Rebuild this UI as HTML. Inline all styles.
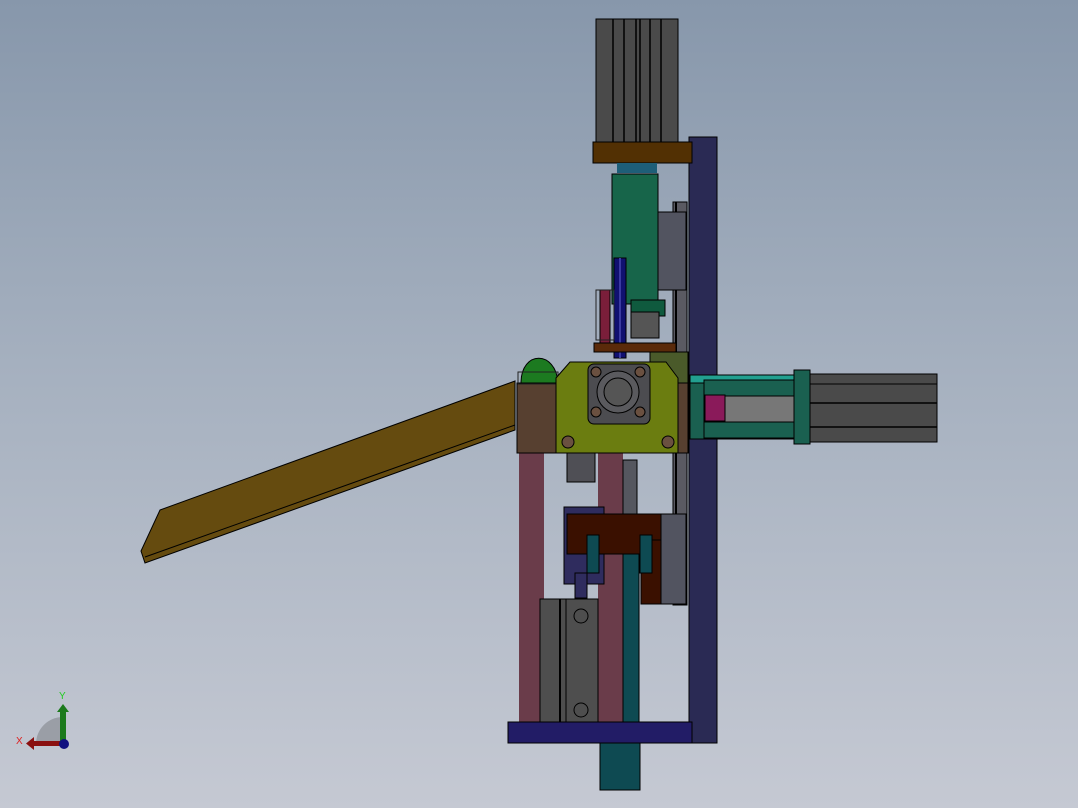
<!DOCTYPE html>
<html><head><meta charset="utf-8"><style>
html,body{margin:0;padding:0;width:1078px;height:808px;overflow:hidden}
body{background:linear-gradient(#8797ab 0%,#a5b0bf 45%,#c5c9d3 100%)}
svg{position:absolute;left:0;top:0}
</style></head><body>
<svg width="1078" height="808" viewBox="0 0 1078 808" stroke="#000" stroke-width="1">
<polygon points="160,510 515,381 515,430 145,563 141,551" fill="#654b0f"/>
<line x1="145" y1="557" x2="515" y2="425" stroke-width="1"/>
<rect x="689" y="137" width="28" height="606" fill="#2a2a54"/>
<rect x="596" y="19" width="82" height="124" fill="#4a4a4a"/>
<g stroke-width="1.5"><line x1="613" y1="19" x2="613" y2="143"/><line x1="624" y1="19" x2="624" y2="143"/><line x1="636" y1="19" x2="636" y2="143"/><line x1="640" y1="19" x2="640" y2="143"/><line x1="650" y1="19" x2="650" y2="143"/><line x1="661" y1="19" x2="661" y2="143"/></g>
<rect x="593" y="142" width="99" height="21" fill="#523003"/>
<rect x="617" y="163" width="40" height="10" fill="#1e5e78" stroke="none"/>
<rect x="673" y="202" width="14" height="403" fill="#5a5a62"/>
<line x1="676" y1="202" x2="676" y2="605" stroke-width="2"/>
<rect x="612" y="174" width="46" height="130" fill="#17654a"/>
<rect x="658" y="212" width="28" height="78" fill="#525460"/>
<rect x="631" y="300" width="34" height="16" fill="#0f5a3e"/>
<rect x="631" y="312" width="28" height="26" fill="#555"/>
<rect x="614" y="258" width="12" height="100" fill="#101070"/>
<line x1="620" y1="258" x2="620" y2="358" stroke="#3a3aa0" stroke-width="2"/>
<rect x="600" y="290" width="10" height="55" fill="#7a1e3a"/>
<rect x="596" y="290" width="18" height="50" fill="none" stroke="#222"/>
<rect x="594" y="343" width="82" height="9" fill="#5a2a0a"/>
<rect x="519" y="440" width="25" height="282" fill="#6a3c4a" stroke="none"/>
<rect x="598" y="440" width="25" height="282" fill="#6a3c4a" stroke="none"/>
<rect x="623" y="535" width="16" height="255" fill="#0e4a52"/>
<rect x="600" y="743" width="40" height="47" fill="#0e4a52"/>
<rect x="567" y="452" width="28" height="30" fill="#4f4f55"/>
<rect x="623" y="460" width="14" height="75" fill="#55575f"/>
<rect x="564" y="507" width="40" height="77" fill="#2f2c5e"/>
<rect x="567" y="514" width="94" height="40" fill="#3a1000"/>
<rect x="641" y="540" width="20" height="64" fill="#3a1000"/>
<rect x="587" y="535" width="12" height="38" fill="#0e4a52"/>
<rect x="640" y="535" width="12" height="38" fill="#0e4a52"/>
<rect x="661" y="514" width="25" height="90" fill="#525460"/>
<rect x="575" y="573" width="12" height="25" fill="#2f2c5e"/>
<rect x="540" y="599" width="58" height="124" fill="#4e4e4e"/>
<line x1="560" y1="599" x2="560" y2="723" stroke-width="2"/><line x1="566" y1="599" x2="566" y2="723"/>
<circle cx="581" cy="616" r="7" fill="none"/><circle cx="581" cy="710" r="7" fill="none"/>
<rect x="508" y="722" width="184" height="21" fill="#221c66"/>
<rect x="517" y="383" width="40" height="70" fill="#574030"/>
<path d="M521,383 C521,350 556,350 558,383 Z" fill="#1c7a20"/>
<rect x="518" y="372" width="40" height="12" fill="none" stroke="#222"/>
<rect x="650" y="352" width="38" height="100" fill="#4a5a2a"/>
<rect x="669" y="383" width="19" height="70" fill="#574030"/>
<polygon points="570,362 666,362 678,378 678,453 556,453 556,378" fill="#6b7d10"/>
<rect x="588" y="364" width="62" height="60" rx="6" fill="#4c4c50"/>
<circle cx="618" cy="392" r="21" fill="#5a5a5e"/><circle cx="618" cy="392" r="14" fill="#555"/>
<g fill="#6a5040"><circle cx="596" cy="372" r="5"/><circle cx="640" cy="372" r="5"/><circle cx="596" cy="412" r="5"/><circle cx="640" cy="412" r="5"/><circle cx="568" cy="442" r="6"/><circle cx="668" cy="442" r="6"/></g>
<rect x="690" y="375" width="118" height="64" fill="#1a6050"/>
<rect x="690" y="375" width="118" height="8" fill="#22a090"/>
<rect x="704" y="380" width="90" height="16" fill="#1a6050"/>
<rect x="704" y="396" width="90" height="26" fill="#777"/>
<rect x="704" y="422" width="90" height="16" fill="#1a6050"/>
<rect x="705" y="395" width="20" height="26" fill="#8a1a5a"/>
<rect x="794" y="370" width="16" height="74" fill="#1a6050"/>
<rect x="810" y="374" width="127" height="68" fill="#4a4a4a"/>
<line x1="810" y1="384" x2="937" y2="384"/><line x1="810" y1="403" x2="937" y2="403" stroke-width="1.5"/><line x1="810" y1="427" x2="937" y2="427" stroke-width="1.5"/>
<path d="M36,744 A27,27 0 0 1 63,717 L63,744 Z" fill="#9a9ea6" stroke="none"/>
<rect x="60" y="710" width="6" height="34" fill="#1c7a1c" stroke="none"/>
<polygon points="57,712 63,704 69,712" fill="#1c7a1c" stroke="none"/>
<rect x="32" y="741" width="31" height="5" fill="#8a1010" stroke="none"/>
<polygon points="34,737 26,743.5 34,750" fill="#8a1010" stroke="none"/>
<circle cx="64" cy="744" r="5" fill="#101080" stroke="none"/>
<text x="59" y="699" font-family="Liberation Sans" font-size="10" fill="#2c2" stroke="none">Y</text>
<text x="16" y="744" font-family="Liberation Sans" font-size="10" fill="#d22" stroke="none">X</text>
</svg>
</body></html>
